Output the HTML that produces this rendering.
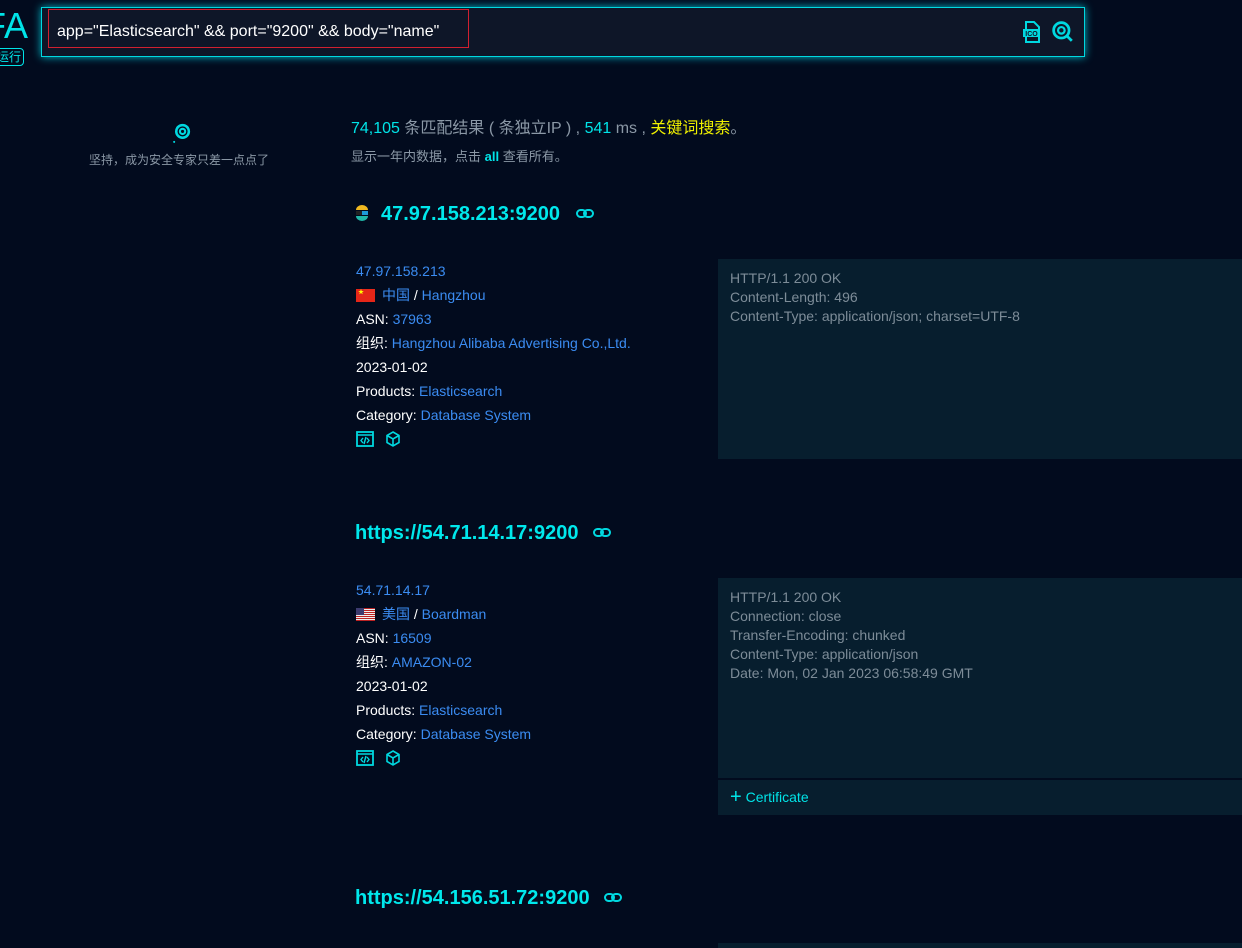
<!DOCTYPE html>
<html><head><meta charset="utf-8"><style>
body{margin:0;width:1242px;height:948px;background:#020b1e;overflow:hidden;font-family:"Liberation Sans","Noto Sans CJK SC",sans-serif;position:relative}
.a{position:absolute}
.c{color:#00e4e8}.b{color:#3b8cf2}.w{color:#fff}.g{color:#8b98a6}
.row{position:absolute;left:356px;font-size:14px;line-height:24px;white-space:nowrap}
.panel{position:absolute;left:718px;width:524px;background:#071e2e;color:#7d8c98;font-size:14px;line-height:19px;padding:10px 12px;box-sizing:border-box}
.title{position:absolute;font-weight:bold;font-size:20px;color:#00e8ec;white-space:nowrap}
</style></head><body>
<div class="a c" style="left:-16px;top:6px;font-size:36px;line-height:40px">FA</div>
<div class="a c" style="left:-6px;top:48px;width:26px;height:16px;border:1px solid #00e4e8;border-radius:4px;font-size:12px;line-height:16px;text-align:right;padding-right:2px">运行</div>
<div class="a" style="left:41px;top:7px;width:1042px;height:48px;border:1px solid #00d8e0;background:#0e1628;box-shadow:0 0 8px #00b8c8"></div>
<div class="a" style="left:48px;top:9px;width:421px;height:39px;border:1px solid #d02030;box-sizing:border-box"></div>
<div class="a w" style="left:57px;top:22px;font-size:16px;line-height:20px">app="Elasticsearch" &amp;&amp; port="9200" &amp;&amp; body="name"</div>
<svg class="a" style="left:1022px;top:21px" width="20" height="22" viewBox="0 0 20 22"><path d="M4 1h8l5 5v15H4z" fill="none" stroke="#00d8e0" stroke-width="2"/><rect x="1" y="8" width="17" height="8" fill="#00d8e0"/><text x="9.5" y="15" font-size="7" text-anchor="middle" fill="#0e1628" font-family="Liberation Sans" font-weight="bold">ICO</text></svg>
<svg class="a" style="left:1052px;top:21px" width="22" height="22" viewBox="0 0 20 20"><circle cx="8.5" cy="8.5" r="7" fill="none" stroke="#00d8e0" stroke-width="2.5"/><circle cx="8.5" cy="8.5" r="3" fill="none" stroke="#00d8e0" stroke-width="2"/><path d="M13 13l5 5" stroke="#00d8e0" stroke-width="2.5"/></svg>
<svg class="a" style="left:171px;top:123px" width="21" height="21" viewBox="0 0 20 20"><circle cx="11" cy="8" r="6" fill="none" stroke="#00d8e0" stroke-width="2.4"/><circle cx="11" cy="8" r="2.5" fill="none" stroke="#00d8e0" stroke-width="2"/><circle cx="3" cy="18" r="1" fill="#00d8e0"/></svg>
<div class="a g" style="left:89px;top:151px;font-size:12px">坚持，成为安全专家只差一点点了</div>
<div class="a" style="left:351px;top:119px;font-size:16px;line-height:20px;white-space:nowrap"><span class="c">74,105</span> <span class="g">条匹配结果 ( 条独立IP ) ,</span> <span class="c">541</span> <span class="g">ms ,</span> <span style="color:#f0f000">关键词搜索</span><span class="g">。</span></div>
<div class="a g" style="left:351px;top:146px;font-size:13px;white-space:nowrap">显示一年内数据，点击 <span class="c" style="font-weight:bold">all</span> 查看所有。</div>

<svg class="a" style="left:355px;top:205px" width="14" height="16" viewBox="0 0 14 16"><path d="M1 5a6 5 0 0 1 12 0z" fill="#f0b820"/><rect x="1" y="6" width="12" height="4" fill="#222"/><rect x="7" y="6" width="6" height="4" fill="#1d9ad8"/><path d="M1 11h12a6 5 0 0 1-12 0z" fill="#20b8a8"/></svg>
<div class="title" style="left:381px;top:203px">47.97.158.213:9200</div>
<svg class="a" style="left:576px;top:209px" width="18" height="9" viewBox="0 0 18 9"><rect x="1" y="1" width="9" height="7" rx="3.5" fill="none" stroke="#00d8e0" stroke-width="2"/><rect x="8" y="1" width="9" height="7" rx="3.5" fill="none" stroke="#00d8e0" stroke-width="2"/></svg>

<div class="row" style="top:259px"><span class="b">47.97.158.213</span></div>
<div class="row" style="top:283px"><span style="display:inline-block;width:19px;height:13px;background:#e52618;vertical-align:-2px;margin-right:7px;position:relative"><span style="position:absolute;left:2px;top:1px;color:#ff0;font-size:6px;line-height:6px">★</span></span><span class="b">中国</span> <span class="w">/</span> <span class="b">Hangzhou</span></div>
<div class="row" style="top:307px"><span class="w">ASN:</span> <span class="b">37963</span></div>
<div class="row" style="top:331px"><span class="w">组织:</span> <span class="b">Hangzhou Alibaba Advertising Co.,Ltd.</span></div>
<div class="row w" style="top:355px">2023-01-02</div>
<div class="row" style="top:379px"><span class="w">Products:</span> <span class="b">Elasticsearch</span></div>
<div class="row" style="top:403px"><span class="w">Category:</span> <span class="b">Database System</span></div>
<svg class="a" style="left:356px;top:431px" width="18" height="16" viewBox="0 0 18 16"><rect x="1" y="1" width="16" height="14" fill="none" stroke="#00d8e0" stroke-width="1.8"/><path d="M1 4h16M7 7l-2 2.5 2 2.5M11 7l2 2.5-2 2.5M10 6l-2 7" fill="none" stroke="#00d8e0" stroke-width="1.4"/></svg>
<svg class="a" style="left:385px;top:431px" width="16" height="16" viewBox="0 0 16 16"><path d="M8 1l6 3.5v7L8 15l-6-3.5v-7zM2 4.5L8 8l6-3.5M8 8v7" fill="none" stroke="#00d8e0" stroke-width="1.6"/></svg>
<div class="panel" style="top:259px;height:200px">HTTP/1.1 200 OK<br>Content-Length: 496<br>Content-Type: application/json; charset=UTF-8</div>

<div class="title" style="left:355px;top:522px">https://54.71.14.17:9200</div>
<svg class="a" style="left:593px;top:528px" width="18" height="9" viewBox="0 0 18 9"><rect x="1" y="1" width="9" height="7" rx="3.5" fill="none" stroke="#00d8e0" stroke-width="2"/><rect x="8" y="1" width="9" height="7" rx="3.5" fill="none" stroke="#00d8e0" stroke-width="2"/></svg>
<div class="row" style="top:578px"><span class="b">54.71.14.17</span></div>
<div class="row" style="top:602px"><span style="display:inline-block;width:19px;height:13px;background:repeating-linear-gradient(#b22 0 1px,#eee 1px 2px);vertical-align:-2px;margin-right:7px;position:relative"><span style="position:absolute;left:0;top:0;width:8px;height:7px;background:#3c3b6e"></span></span><span class="b">美国</span> <span class="w">/</span> <span class="b">Boardman</span></div>
<div class="row" style="top:626px"><span class="w">ASN:</span> <span class="b">16509</span></div>
<div class="row" style="top:650px"><span class="w">组织:</span> <span class="b">AMAZON-02</span></div>
<div class="row w" style="top:674px">2023-01-02</div>
<div class="row" style="top:698px"><span class="w">Products:</span> <span class="b">Elasticsearch</span></div>
<div class="row" style="top:722px"><span class="w">Category:</span> <span class="b">Database System</span></div>
<svg class="a" style="left:356px;top:750px" width="18" height="16" viewBox="0 0 18 16"><rect x="1" y="1" width="16" height="14" fill="none" stroke="#00d8e0" stroke-width="1.8"/><path d="M1 4h16M7 7l-2 2.5 2 2.5M11 7l2 2.5-2 2.5M10 6l-2 7" fill="none" stroke="#00d8e0" stroke-width="1.4"/></svg>
<svg class="a" style="left:385px;top:750px" width="16" height="16" viewBox="0 0 16 16"><path d="M8 1l6 3.5v7L8 15l-6-3.5v-7zM2 4.5L8 8l6-3.5M8 8v7" fill="none" stroke="#00d8e0" stroke-width="1.6"/></svg>
<div class="panel" style="top:578px;height:200px">HTTP/1.1 200 OK<br>Connection: close<br>Transfer-Encoding: chunked<br>Content-Type: application/json<br>Date: Mon, 02 Jan 2023 06:58:49 GMT</div>
<div class="panel" style="top:779px;height:36px;padding:8px 12px;border-top:1px solid #020b1e"><span class="c" style="font-size:20px;vertical-align:-1px">+</span> <span class="c">Certificate</span></div>

<div class="title" style="left:355px;top:887px">https://54.156.51.72:9200</div>
<svg class="a" style="left:604px;top:893px" width="18" height="9" viewBox="0 0 18 9"><rect x="1" y="1" width="9" height="7" rx="3.5" fill="none" stroke="#00d8e0" stroke-width="2"/><rect x="8" y="1" width="9" height="7" rx="3.5" fill="none" stroke="#00d8e0" stroke-width="2"/></svg>
<div class="a" style="left:718px;top:943px;width:524px;height:5px;background:#071e2e"></div>
</body></html>
